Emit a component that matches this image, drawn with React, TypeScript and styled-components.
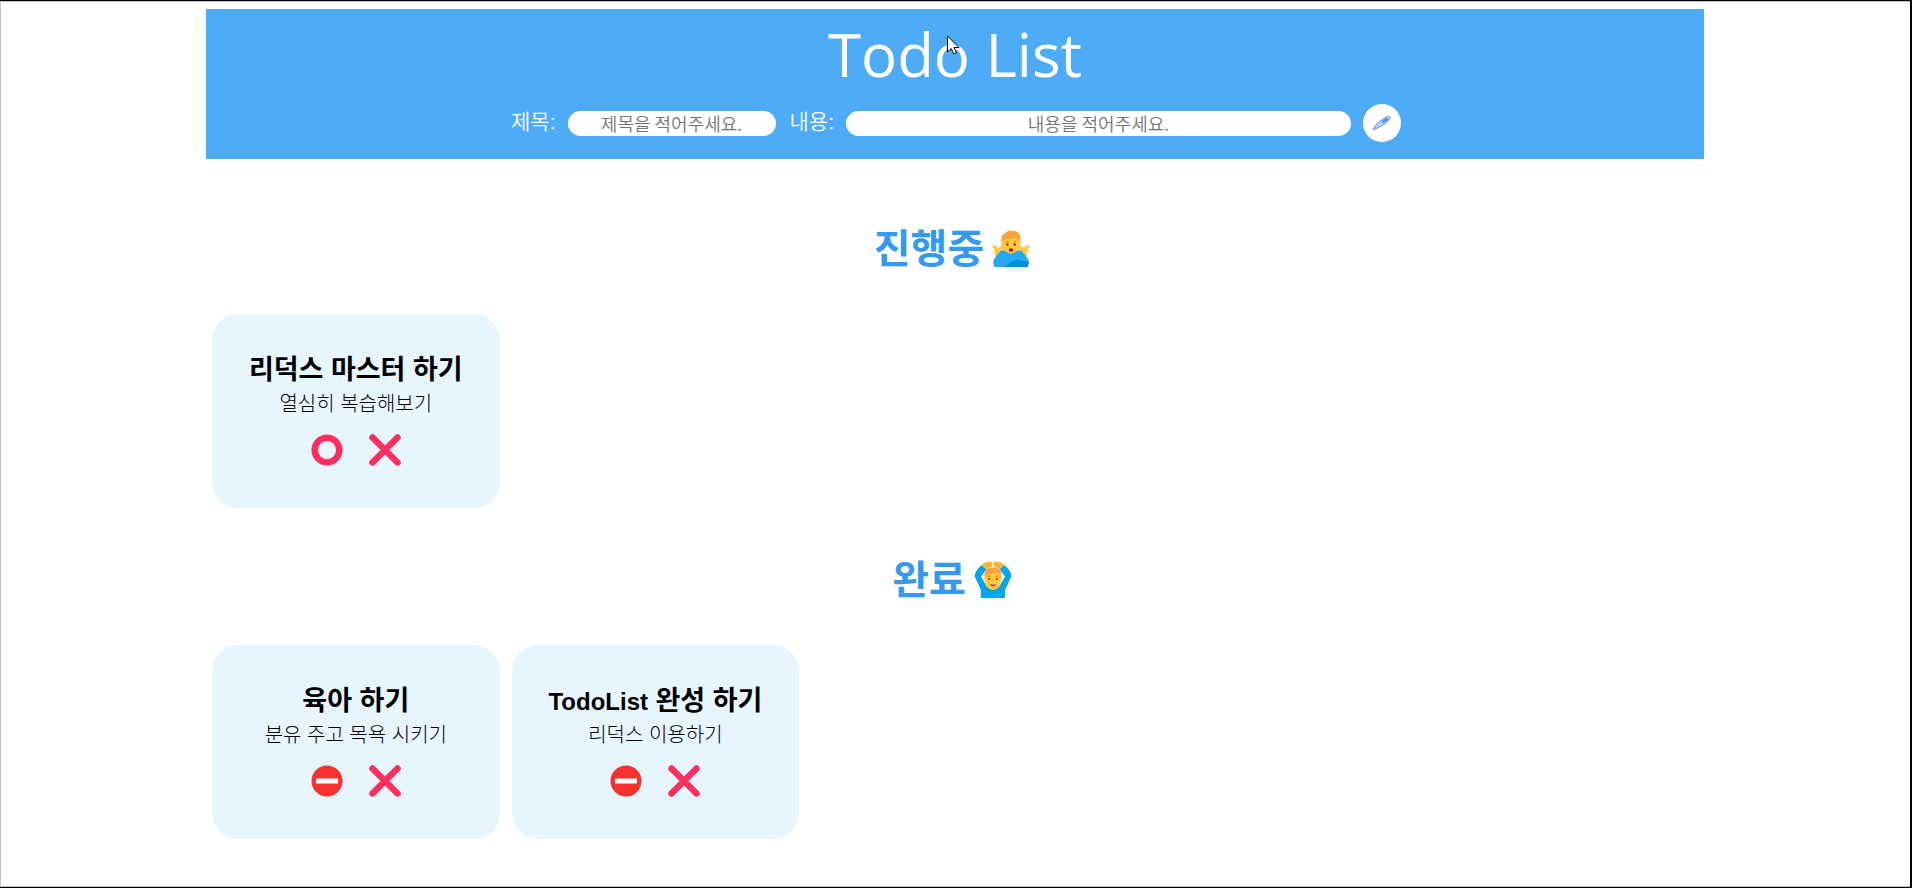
import React from "react";
import styled, { createGlobalStyle } from "styled-components";

const GlobalStyle = createGlobalStyle`
  * { box-sizing: border-box; }
  body {
    margin: 0;
    background: #ffffff;
    font-family: "Liberation Sans", "Noto Sans CJK KR", sans-serif;
    color: #000000;
  }
`;

const Frame = styled.div`
  min-height: 100vh;
  border-style: solid;
  border-color: #000000;
  border-width: 1px 2px 1px 0;
`;

const Page = styled.div`
  min-height: calc(100vh - 2px);
  padding: 7px 206px 40px 205px;
  border-style: solid;
  border-color: #c0c0c0;
  border-width: 1px 0 1px 1px;
`;

const Header = styled.header`
  display: flex;
  flex-direction: column;
  align-items: center;
  padding-bottom: 12px;
  background: #4dabf7;
  color: #ffffff;
`;

const PageTitle = styled.h1`
  margin: 0;
  font-family: "Open Sans", "Noto Sans", sans-serif;
  font-size: 60px;
  font-weight: 400;
  line-height: 90px;
`;

const Form = styled.form`
  display: flex;
  align-items: center;
  gap: 12px;
  height: 48px;
`;

const Field = styled.div`
  display: flex;
  align-items: center;
  gap: 12px;
`;

const Label = styled.label`
  padding: 0 0 2px 2px;
  font-size: 21px;
  font-weight: 350;
  line-height: 28px;
`;

const TextInput = styled.input<{ $width: number }>`
  width: ${(p) => p.$width}px;
  height: 25px;
  padding: 0 12px;
  border: none;
  border-radius: 13px;
  background: #ffffff;
  font-family: "Noto Sans CJK KR", sans-serif;
  font-size: 18px;
  font-weight: 350;
  line-height: 24px;
  text-align: center;
  &::placeholder { color: #757575; opacity: 1; }
`;

const RoundButton = styled.button`
  display: flex;
  align-items: center;
  justify-content: center;
  width: 38px;
  height: 38px;
  padding: 0;
  border: none;
  border-radius: 50%;
  background: #ffffff;
`;

const Main = styled.main`
  padding-top: 18px;
`;

const SectionTitle = styled.h2`
  display: flex;
  align-items: center;
  justify-content: center;
  gap: 8px;
  margin: 0;
  padding: 41px 6px 40px 0;
  color: #339af0;
  font-family: "Noto Sans CJK KR", sans-serif;
  font-size: 40px;
  font-weight: 700;
  line-height: 56px;
  svg { margin-top: 6px; }
`;

const Cards = styled.ul`
  display: grid;
  grid-template-columns: repeat(5, 1fr);
  gap: 12px;
  margin: 0;
  padding: 0 6px;
  list-style: none;
`;

const Card = styled.li`
  display: flex;
  flex-direction: column;
  align-items: center;
  padding: 38px 12px 42px;
  border-radius: 26px;
  background: #e7f5ff;
`;

const CardTitle = styled.h3`
  height: 36px;
  margin: 0;
  font-size: 27px;
  font-weight: 700;
  line-height: 36px;
`;

const Latin = styled.span`
  font-size: 24px;
  line-height: 24px;
`;

const CardText = styled.p`
  height: 32px;
  margin: 0;
  color: #000000;
  font-size: 20px;
  font-weight: 300;
  line-height: 32px;
`;

const Actions = styled.div`
  display: flex;
  gap: 26px;
  margin-top: 14px;
`;

const IconButton = styled.button`
  display: block;
  width: 32px;
  height: 32px;
  padding: 0;
  border: none;
  background: none;
`;

const Pointer = styled.svg`
  position: absolute;
  left: 947px;
  top: 35px;
`;

const RingIcon = () => (
  <svg width="32" height="32" viewBox="0 0 32 32" aria-hidden="true">
    <circle cx="16" cy="16" r="12.3" fill="none" stroke="#fc305f" strokeWidth="6.5" />
  </svg>
);

const CrossIcon = () => (
  <svg width="32" height="32" viewBox="0 0 32 32" aria-hidden="true">
    <path d="M3.5 3.5 28.5 28.5M28.5 3.5 3.5 28.5" stroke="#fc305f" strokeWidth="6.5" strokeLinecap="round" />
  </svg>
);

const NoEntryIcon = () => (
  <svg width="32" height="32" viewBox="0 0 32 32" aria-hidden="true">
    <circle cx="16" cy="16" r="15.5" fill="#f8312f" />
    <rect x="5" y="13.5" width="22" height="5" rx="0.5" fill="#ffffff" />
  </svg>
);

const PenIcon = () => (
  <svg width="20" height="18" viewBox="0 0 20 18" aria-hidden="true">
    <path d="M1.2 15.6 3 12.2Q8 6.6 14 3.2Q18.6 1.400 18 4.400Q16.500 6.800 12 10Q7 13.400 4.400 14.600Z" fill="#dbe7fc" stroke="#6f9fee" strokeWidth="1.2" strokeLinejoin="round" />
    <path d="M9.500 7 15 3.500 16.500 5.500 11 9.500Z" fill="#4c97f3" />
    <path d="M4 13 11 7.500" stroke="#8aa4e8" strokeWidth="0.800" />
    <path d="M0.900 16 2.600 12.600 4.600 14.400Z" fill="#a3a0e6" />
  </svg>
);

const GesturingNoIcon = () => (
  <svg width="38" height="38" viewBox="0 0 38 38" aria-hidden="true">
    <path d="M1 15Q3 14.500 5 17L7 18Q8 15 9.500 17L10 22 8 25 4 26.500 2 24 4 23 1 21 3 19.500 0.500 17ZM37 15Q35 14.500 33 17L31 18Q30 15 28.500 17L28 22 30 25 34 26.500 36 24 34 23 37 21 35 19.500 37.500 17Z" fill="#ffc83d" />
    <path d="M9.500 18V8Q10 3.500 14 2.500Q16 0 20 0.800Q27 0.500 28.500 7V18Z" fill="#f9a33c" />
    <path d="M10 12Q11.500 9 14 9L24 8Q27 9 28 12V17C28 21 24 25 19 25S10 21 10 17Z" fill="#ffc83d" />
    <path d="M13.500 12Q15 11 16.500 12M21.500 12Q23 11 24.500 12" fill="none" stroke="#d67d00" strokeWidth="1" />
    <circle cx="15.300" cy="14.500" r="1.300" fill="#6b4424" />
    <circle cx="22.700" cy="14.500" r="1.300" fill="#6b4424" />
    <ellipse cx="19" cy="20" rx="2.300" ry="1.700" fill="#a51539" />
    <path d="M1 32Q1.500 29 5 25L8.500 21Q10.500 19.500 13 21L19 24 25 21Q27.500 19.500 29.500 21L33 25Q36.500 29 37 32L35.500 37H2.500Z" fill="#26a9f4" />
    <path d="M11 37 24 29.500 37 32 35.500 37Z" fill="#0090e0" />
  </svg>
);

const GesturingOkIcon = () => (
  <svg width="38" height="38" viewBox="0 0 38 38" aria-hidden="true">
    <path d="M8 4 13 7.500 7 15.500 13 26H25L31 15.500 25 7.500 30 4Q36 8 37.500 15L31 29V37H7V29L0.500 15Q2 8 8 4Z" fill="#00a6ed" />
    <path d="M8 5Q8.500 1.500 13 1Q17 0 18.500 1.500V5Q16 7 12 8ZM30 5Q29.500 1.500 25 1Q21 0 19.500 1.500V5Q22 7 26 8Z" fill="#f9b43c" />
    <path d="M10.500 18V12Q11.500 7 17 6.500Q27 5.500 27.500 13V18Z" fill="#f9a33c" />
    <path d="M11 15Q12.500 13 15 13L23 11.500Q26 12.500 27 15V19C27 25 23 29 19 29S11 25 11 19Z" fill="#ffc83d" />
    <path d="M13.500 15.500Q15 14.500 16.500 15.500M21.500 15.500Q23 14.500 24.500 15.500" fill="none" stroke="#d67d00" strokeWidth="1" />
    <circle cx="15.300" cy="18" r="1.100" fill="#6b4424" />
    <circle cx="22.700" cy="18" r="1.100" fill="#6b4424" />
    <path d="M16.500 23.500Q19 25.500 21.500 23.500" fill="none" stroke="#b0203c" strokeWidth="1.300" />
  </svg>
);

interface Todo {
  id: number;
  title: React.ReactNode;
  text: string;
  done: boolean;
}

const todos: Todo[] = [
  { id: 1, title: "리덕스 마스터 하기", text: "열심히 복습해보기", done: false },
  { id: 2, title: "육아 하기", text: "분유 주고 목욕 시키기", done: true },
  { id: 3, title: <><Latin>TodoList</Latin> 완성 하기</>, text: "리덕스 이용하기", done: true },
];

const TodoCards = ({ items }: { items: Todo[] }) => (
  <Cards>
    {items.map((t) => (
      <Card key={t.id}>
        <CardTitle>{t.title}</CardTitle>
        <CardText>{t.text}</CardText>
        <Actions>
          <IconButton type="button" aria-label={t.done ? "취소" : "완료"}>
            {t.done ? <NoEntryIcon /> : <RingIcon />}
          </IconButton>
          <IconButton type="button" aria-label="삭제"><CrossIcon /></IconButton>
        </Actions>
      </Card>
    ))}
  </Cards>
);

export default function App() {
  return (
    <Frame>
      <GlobalStyle />
      <Page>
        <Header>
          <PageTitle>Todo List</PageTitle>
          <Form onSubmit={(e) => e.preventDefault()}>
            <Field>
              <Label htmlFor="title">제목:</Label>
              <TextInput id="title" $width={208} placeholder="제목을 적어주세요." />
            </Field>
            <Field>
              <Label htmlFor="content">내용:</Label>
              <TextInput id="content" $width={505} placeholder="내용을 적어주세요." />
            </Field>
            <RoundButton type="submit" aria-label="추가"><PenIcon /></RoundButton>
          </Form>
        </Header>
        <Main>
          <section>
            <SectionTitle>진행중<GesturingNoIcon /></SectionTitle>
            <TodoCards items={todos.filter((t) => !t.done)} />
          </section>
          <section>
            <SectionTitle>완료<GesturingOkIcon /></SectionTitle>
            <TodoCards items={todos.filter((t) => t.done)} />
          </section>
        </Main>
      </Page>
      <Pointer width="13" height="20" viewBox="0 0 13 20" aria-hidden="true">
        <path d="M0.500 1V17L4.200 13.500 6.800 19 9.500 18 7 12.500H12Z" fill="#ffffff" stroke="#000000" />
      </Pointer>
    </Frame>
  );
}
